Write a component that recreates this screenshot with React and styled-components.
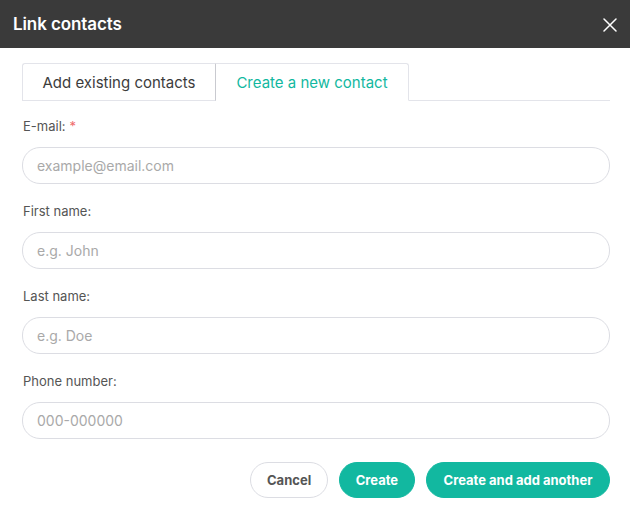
import React from "react";
import styled, { createGlobalStyle } from "styled-components";

const Global = createGlobalStyle`
  html, body { margin: 0; padding: 0; background: #fff; }
  body { font-family: Inter, "Noto Sans", sans-serif; }
  * { box-sizing: border-box; }
`;

const Dialog = styled.div`
  width: 630px;
  height: 515px;
  background: #fff;
  display: flex;
  flex-direction: column;
`;

const Header = styled.div`
  height: 48px;
  background: #3a3a3a;
  display: flex;
  align-items: center;
  justify-content: space-between;
  padding: 0 13px 0 13px;
`;

const Title = styled.h1`
  margin: 0;
  font-size: 17px;
  font-weight: 600;
  color: #fff;
  letter-spacing: -0.1px;
`;

const CloseBtn = styled.button`
  border: none;
  background: transparent;
  padding: 0;
  width: 15px;
  height: 15px;
  display: flex;
  align-items: center;
  justify-content: center;
  cursor: pointer;
  margin-top: 1px;
`;

const Body = styled.div`
  padding: 15px 20px 0 22px;
  display: flex;
  flex-direction: column;
`;

const TabBar = styled.div`
  display: flex;
  height: 38px;
  border-bottom: 1px solid #e3e4ea;
`;

const Tab = styled.div`
  width: ${(p) => (p.$first ? "194px" : "193px")};
  display: flex;
  align-items: center;
  justify-content: center;
  font-size: 15px;
  color: ${(p) => (p.$active ? "#12b8a0" : "#3c3c3c")};
  border: 1px solid #e3e4ea;
  border-left: ${(p) => (p.$active ? "none" : "1px solid #e3e4ea")};
  border-right: 1px solid ${(p) => (p.$active ? "#e3e4ea" : "#c9cad0")};
  border-bottom: ${(p) => (p.$active ? "1px solid #fff" : "1px solid #e3e4ea")};
  margin-bottom: -1px;
  border-radius: ${(p) => (p.$active ? "0 3px 0 0" : "3px 0 0 0")};
  background: #fff;
`;

const Form = styled.div`
  padding-top: 17px;
  display: flex;
  flex-direction: column;
  gap: 19px;
`;

const Field = styled.div`
  display: flex;
  flex-direction: column;
  gap: 13px;
`;

const Label = styled.label`
  font-size: 13px;
  line-height: 16px;
  color: #555;
  padding-left: 1px;
`;

const Req = styled.span`
  color: #ef6b6b;
  margin-left: 4px;
`;

const Input = styled.input`
  height: 37px;
  width: 100%;
  border: 1px solid #dcdde3;
  border-radius: 18px;
  padding: 0 14px;
  font-family: Inter, "Noto Sans", sans-serif;
  font-size: 14px;
  color: #333;
  outline: none;
  &::placeholder { color: #a9a9a9; }
`;

const Actions = styled.div`
  display: flex;
  justify-content: flex-end;
  gap: 11px;
  margin-top: 23px;
`;

const Button = styled.button`
  height: 36px;
  padding: 0 ${(p) => p.$pad || 17}px;
  border-radius: 18px;
  font-family: Inter, "Noto Sans", sans-serif;
  font-size: 13px;
  font-weight: 700;
  cursor: pointer;
  border: 1px solid ${(p) => (p.$primary ? "#12b8a0" : "#dcdde3")};
  background: ${(p) => (p.$primary ? "#12b8a0" : "#fff")};
  color: ${(p) => (p.$primary ? "#fff" : "#555")};
`;

const fields = [
  { label: "E-mail:", ph: "example@email.com", req: true },
  { label: "First name:", ph: "e.g. John" },
  { label: "Last name:", ph: "e.g. Doe" },
  { label: "Phone number:", ph: "000-000000" },
];

export default function App() {
  return (
    <>
      <Global />
      <Dialog>
        <Header>
          <Title>Link contacts</Title>
          <CloseBtn aria-label="Close">
            <svg width="14" height="14" viewBox="0 0 14 14">
              <path d="M1 1L13 13M13 1L1 13" stroke="#fff" strokeWidth="1.5" strokeLinecap="round" />
            </svg>
          </CloseBtn>
        </Header>
        <Body>
          <TabBar>
            <Tab $first>Add existing contacts</Tab>
            <Tab $active>Create a new contact</Tab>
          </TabBar>
          <Form>
            {fields.map((f) => (
              <Field key={f.label}>
                <Label>
                  {f.label}
                  {f.req && <Req>*</Req>}
                </Label>
                <Input placeholder={f.ph} />
              </Field>
            ))}
          </Form>
          <Actions>
            <Button $pad={15.5}>Cancel</Button>
            <Button $primary $pad={16}>Create</Button>
            <Button $primary $pad={16.5}>Create and add another</Button>
          </Actions>
        </Body>
      </Dialog>
    </>
  );
}
